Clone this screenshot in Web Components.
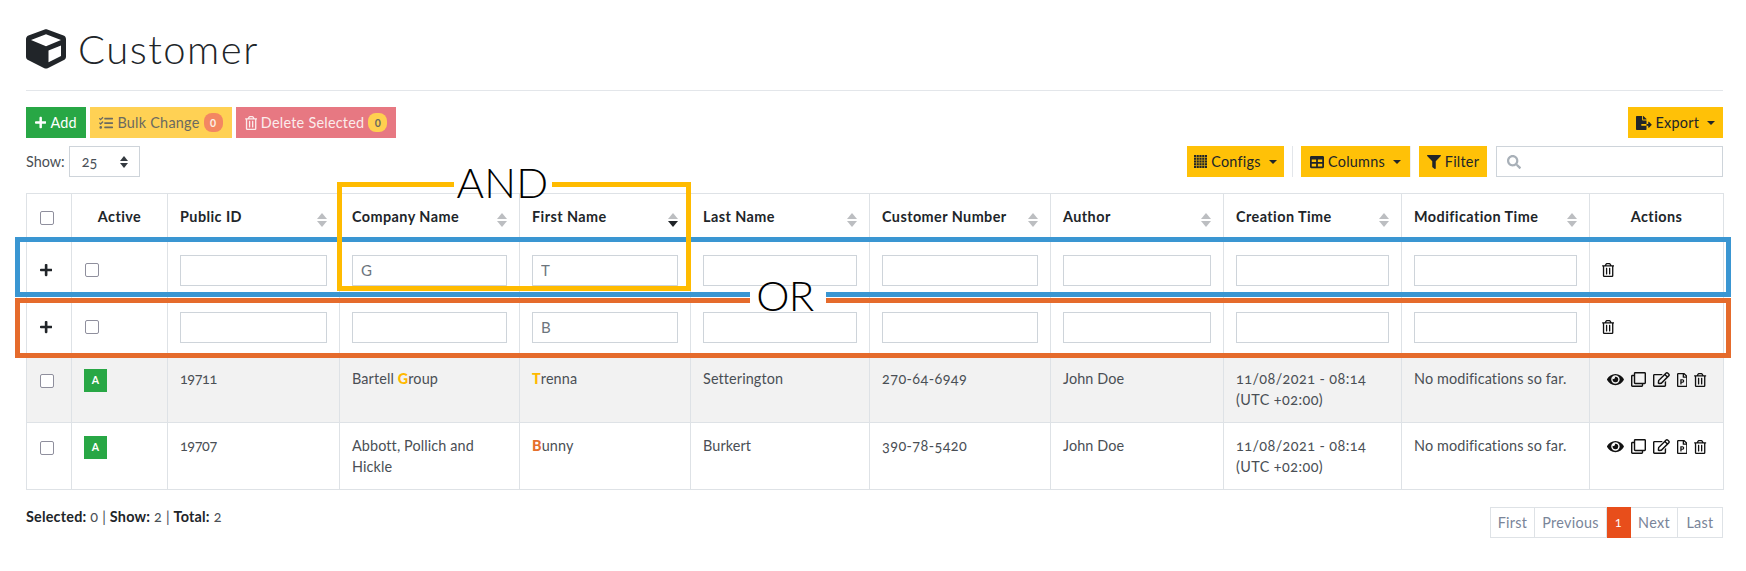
<!DOCTYPE html>
<html lang="en"><head><meta charset="utf-8"><title>Customer</title>
<style>
html,body{margin:0;padding:0;background:#fff}
body{font-family:Lato,"Liberation Sans",sans-serif;font-size:14.4px;color:#212529}
</style></head>
<body>
<customer-page></customer-page>
<script>
const ICONS={
cube:[512,"M239.1 6.3l-208 78c-18.7 7-31.1 25-31.1 45v225.1c0 18.2 10.3 34.8 26.5 42.9l208 104c13.5 6.8 29.4 6.8 42.9 0l208-104c16.3-8.1 26.5-24.8 26.5-42.9V129.3c0-20-12.4-37.9-31.1-44.9l-208-78C262 2.2 250 2.2 239.1 6.3zM256 68.4l192 72v1.1l-192 78-192-78v-1.1l192-72zm32 356V275.5l160-65v133.9l-160 80z"],
plus:[448,"M416 208H272V64c0-17.67-14.33-32-32-32h-32c-17.67 0-32 14.33-32 32v144H32c-17.67 0-32 14.33-32 32v32c0 17.67 14.33 32 32 32h144v144c0 17.67 14.33 32 32 32h32c17.67 0 32-14.33 32-32V304h144c17.67 0 32-14.33 32-32v-32c0-17.67-14.33-32-32-32z"],
trash:[448,"M268 416h24a12 12 0 0 0 12-12V188a12 12 0 0 0-12-12h-24a12 12 0 0 0-12 12v216a12 12 0 0 0 12 12zM432 80h-82.41l-34-56.7A48 48 0 0 0 274.41 0H173.59a48 48 0 0 0-41.16 23.3L98.41 80H16A16 16 0 0 0 0 96v16a16 16 0 0 0 16 16h16v336a48 48 0 0 0 48 48h288a48 48 0 0 0 48-48V128h16a16 16 0 0 0 16-16V96a16 16 0 0 0-16-16zM171.84 50.91A6 6 0 0 1 177 48h94a6 6 0 0 1 5.15 2.91L293.61 80H154.39zM368 464H80V128h288zm-212-48h24a12 12 0 0 0 12-12V188a12 12 0 0 0-12-12h-24a12 12 0 0 0-12 12v216a12 12 0 0 0 12 12z"],
tasks:[512,"M139.61 35.5a12 12 0 0 0-17 0L58.93 98.81l-22.7-22.12a12 12 0 0 0-17 0L3.53 92.41a12 12 0 0 0 0 17l47.59 47.4a12.78 12.78 0 0 0 17.61 0l15.59-15.62L156.52 69a12.09 12.09 0 0 0 .09-17zm0 159.19a12 12 0 0 0-17 0l-63.68 63.72-22.7-22.1a12 12 0 0 0-17 0L3.53 252a12 12 0 0 0 0 17L51 316.5a12.77 12.77 0 0 0 17.6 0l15.7-15.69 72.2-72.22a12 12 0 0 0 .09-16.9zM64 368c-26.49 0-48.59 21.5-48.59 48S37.53 464 64 464a48 48 0 0 0 0-96zm432 16H208a16 16 0 0 0-16 16v32a16 16 0 0 0 16 16h288a16 16 0 0 0 16-16v-32a16 16 0 0 0-16-16zm0-320H208a16 16 0 0 0-16 16v32a16 16 0 0 0 16 16h288a16 16 0 0 0 16-16V80a16 16 0 0 0-16-16zm0 160H208a16 16 0 0 0-16 16v32a16 16 0 0 0 16 16h288a16 16 0 0 0 16-16v-32a16 16 0 0 0-16-16z"],
export:[576,"M384 121.9c0-6.3-2.5-12.4-7-16.9L279.1 7c-4.5-4.5-10.6-7-17-7H256v128h128zM571 308l-95.7-96.4c-10.1-10.1-27.4-3-27.4 11.3V288h-64v64h64v65.2c0 14.3 17.3 21.4 27.4 11.3L571 332c6.6-6.6 6.6-17.4 0-24zm-379 28v-32c0-8.8 7.2-16 16-16h176V160H248c-13.2 0-24-10.8-24-24V0H24C10.7 0 0 10.7 0 24v464c0 13.3 10.7 24 24 24h336c13.3 0 24-10.7 24-24V352H208c-8.8 0-16-7.2-16-16z"],
table:[512,"M464 32H48C21.49 32 0 53.49 0 80v352c0 26.51 21.49 48 48 48h416c26.51 0 48-21.49 48-48V80c0-26.51-21.49-48-48-48zM224 416H64v-96h160v96zm0-160H64v-96h160v96zm224 160H288v-96h160v96zm0-160H288v-96h160v96z"],
filter:[512,"M487.976 0H24.028C2.71 0-8.047 25.866 7.058 40.971L192 225.941V432c0 7.831 3.821 15.17 10.237 19.662l80 55.98C298.02 518.69 320 507.493 320 487.98V225.941l184.947-184.97C520.021 25.896 509.338 0 487.976 0z"],
search:[512,"M505 442.7L405.3 343c-4.5-4.5-10.6-7-17-7H372c27.6-35.3 44-79.7 44-128C416 93.1 322.9 0 208 0S0 93.1 0 208s93.1 208 208 208c48.3 0 92.7-16.4 128-44v16.3c0 6.4 2.5 12.5 7 17l99.7 99.7c9.4 9.4 24.6 9.4 33.9 0l28.3-28.3c9.4-9.4 9.4-24.6.1-34zM208 336c-70.7 0-128-57.2-128-128 0-70.7 57.2-128 128-128 70.7 0 128 57.2 128 128 0 70.7-57.2 128-128 128z"],
eye:[576,"M572.52 241.4C518.29 135.59 410.93 64 288 64S57.68 135.64 3.48 241.41a32.35 32.35 0 0 0 0 29.19C57.71 376.41 165.07 448 288 448s230.32-71.64 284.52-177.41a32.35 32.35 0 0 0 0-29.19zM288 400a144 144 0 1 1 144-144 143.93 143.93 0 0 1-144 144zm0-240a95.31 95.31 0 0 0-25.31 3.79 47.85 47.85 0 0 1-66.9 66.9A95.78 95.78 0 1 0 288 160z"],
clone:[512,"M464 0H144c-26.51 0-48 21.49-48 48v48H48c-26.51 0-48 21.49-48 48v320c0 26.51 21.49 48 48 48h320c26.51 0 48-21.49 48-48v-48h48c26.51 0 48-21.49 48-48V48c0-26.51-21.49-48-48-48zM362 464H54a6 6 0 0 1-6-6V150a6 6 0 0 1 6-6h42v224c0 26.51 21.49 48 48 48h224v42a6 6 0 0 1-6 6zm96-96H150a6 6 0 0 1-6-6V54a6 6 0 0 1 6-6h308a6 6 0 0 1 6 6v308a6 6 0 0 1-6 6z"],
edit:[576,"M402.3 344.9l32-32c5-5 13.7-1.5 13.7 5.7V464c0 26.5-21.5 48-48 48H48c-26.5 0-48-21.5-48-48V112c0-26.5 21.5-48 48-48h273.5c7.1 0 10.7 8.6 5.7 13.7l-32 32c-1.5 1.5-3.5 2.3-5.7 2.3H48v352h352V350.5c0-2.1.8-4.1 2.3-5.6zm156.6-201.8L296.3 405.7l-90.4 10c-26.2 2.9-48.5-19.2-45.6-45.6l10-90.4L432.9 17.1c22.9-22.9 59.9-22.9 82.7 0l43.2 43.2c22.9 22.9 22.9 60 .1 82.8zM460.1 174L402 115.9 216.2 301.8l-7.3 65.3 65.3-7.3L460.1 174zm64.8-79.7l-43.2-43.2c-4.1-4.1-10.8-4.1-14.8 0L436 82l58.1 58.1 30.9-30.9c4-4.2 4-10.8-.1-14.9z"],
filep:[384,"M369.9 97.9L286 14C277 5 264.8-.1 252.1-.1H48C21.5 0 0 21.5 0 48v416c0 26.5 21.5 48 48 48h288c26.5 0 48-21.5 48-48V131.9c0-12.7-5.1-25-14.1-34zM332.1 128H256V51.9l76.1 76.1zM48 464V48h160v104c0 13.3 10.7 24 24 24h104v288H48zm72-60V236c0-6.6 5.4-12 12-12h69.2c36.7 0 62.8 27 62.8 66.3 0 74.3-68.7 66.5-95.5 66.5V404c0 6.6-5.4 12-12 12H132c-6.6 0-12-5.4-12-12zm48.5-87.4h23c7.9 0 13.9-2.4 18.1-7.2 8.5-9.8 8.4-28.5.1-37.8-4.1-4.6-9.9-7-17.4-7h-23.9v52z"]
};
function dots(){let s='<rect width="13" height="13" fill-opacity=".2"/>';for(let y=0;y<5;y++)for(let x=0;x<5;x++)s+=`<rect x="${x*2.75}" y="${y*2.75}" width="2" height="2"/>`;return s}
class AppIcon extends HTMLElement{
 connectedCallback(){
  const n=this.getAttribute('name'),s=this.getAttribute('size')||14;
  const r=this.attachShadow({mode:'open'});
  if(n==='dots'){r.innerHTML=`<style>:host{display:inline-flex;align-items:center}svg{display:block;fill:currentColor}</style><svg width="${s}" height="${s}" viewBox="0 0 13 13" aria-hidden="true">${dots()}</svg>`;return}
  const [w,d]=ICONS[n];
  const h=(+s), wd=(+s)*w/512;
  r.innerHTML=`<style>:host{display:inline-flex;align-items:center}svg{display:block;fill:currentColor}</style><svg width="${wd}" height="${h}" viewBox="0 0 ${w} 512" aria-hidden="true"><path d="${d}"/></svg>`;
 }
}
customElements.define('app-icon',AppIcon);

class AppButton extends HTMLElement{
 constructor(){super();this.attachShadow({mode:'open'}).innerHTML=`<style>
 :host{display:inline-flex;align-items:center;justify-content:center;height:31px;box-sizing:border-box;gap:4px;white-space:nowrap;font-size:14.4px;letter-spacing:.25px;background:var(--bg,#ffc107);color:var(--fg,#212529);font-family:Lato,sans-serif}
 :host([caret])::after{content:"";margin-left:4px;border-top:4.5px solid currentColor;border-left:4.5px solid transparent;border-right:4.5px solid transparent}
 </style><slot></slot>`}
}
customElements.define('app-button',AppButton);

class CountBadge extends HTMLElement{
 constructor(){super();this.attachShadow({mode:'open'}).innerHTML=`<style>
 :host{display:inline-flex;align-items:center;justify-content:center;width:19px;height:19px;border-radius:8px;font-size:10.5px;font-weight:700;background:var(--bg);color:var(--fg);margin-left:0}
 </style><slot></slot>`}
}
customElements.define('count-badge',CountBadge);

class PageTitle extends HTMLElement{
 constructor(){super();this.attachShadow({mode:'open'}).innerHTML=`<style>
 :host{display:flex;align-items:center;gap:12px;height:40px;margin-top:29px;padding-bottom:21px;border-bottom:1px solid #e3e6ea;font-family:Lato,sans-serif}
 h1{margin:0;font-size:40px;font-weight:300;line-height:40px;letter-spacing:1.5px;color:#212529}
 app-icon{color:#212529;margin-top:-1px}
 </style><app-icon name="cube" size="40"></app-icon><h1><slot></slot></h1>`}
}
customElements.define('page-title',PageTitle);

class ActionBar extends HTMLElement{
 constructor(){super();this.attachShadow({mode:'open'}).innerHTML=`<style>
 :host{display:flex;justify-content:space-between;align-items:center;margin-top:16px}
 .l{display:flex;gap:4px}
 .b{--bg:#ffd154;--fg:#6b6a60;width:142px}
 .d{--bg:#e77882;--fg:#fbecec;width:160px}
 </style><div class="l">
 <app-button style="--bg:#28a745;--fg:#fff;width:60px"><app-icon name="plus" size="13"></app-icon>Add</app-button>
 <app-button class="b"><app-icon name="tasks" size="14"></app-icon>Bulk Change<count-badge style="--bg:#f38662;--fg:#fbeee6">0</count-badge></app-button>
 <app-button class="d"><app-icon name="trash" size="14"></app-icon>Delete Selected<count-badge style="--bg:#ffd04f;--fg:#6b6a60">0</count-badge></app-button>
 </div>
 <app-button caret style="width:95px"><app-icon name="export" size="14"></app-icon>Export</app-button>`}
}
customElements.define('action-bar',ActionBar);

class ShowBar extends HTMLElement{
 constructor(){super();this.attachShadow({mode:'open'}).innerHTML=`<style>
 :host{display:flex;align-items:center;justify-content:space-between;margin-top:8px;height:31px;font-family:Lato,sans-serif}
 .l,.r{display:flex;align-items:center}
 .l{color:#4a4f55}
 .sel{box-sizing:border-box;width:71px;height:31px;border:1px solid #ced4da;margin-left:4px;display:flex;align-items:center;justify-content:space-between;padding:0 11px 0 12px;color:#495057;font-feature-settings:"onum"}
 .arr{display:flex;flex-direction:column;gap:2px}
 .arr i{display:block;border-left:4px solid transparent;border-right:4px solid transparent}
 .arr i:first-child{border-bottom:5px solid #343a40}.arr i:last-child{border-top:5px solid #343a40}
 .sep{width:1px;height:31px;background:#e3e6ea;margin:0 8px}
 .sep.w{background:#f0f0f0;margin:0 8px 0 0}
 .s{box-sizing:border-box;width:227px;height:31px;border:1px solid #ced4da;margin-left:9px;display:flex;align-items:center;padding-left:10px;color:#a8b0b8}
 </style><div class="l">Show:<div class="sel">25<span class="arr"><i></i><i></i></span></div></div>
 <div class="r">
 <app-button caret style="width:97px"><app-icon name="dots" size="13"></app-icon>Configs</app-button><span class="sep"></span>
 <app-button caret style="width:109px"><app-icon name="table" size="14"></app-icon>Columns</app-button><span class="sep w"></span>
 <app-button style="width:68px"><app-icon name="filter" size="14"></app-icon>Filter</app-button>
 <div class="s"><app-icon name="search" size="14"></app-icon></div></div>`}
}
customElements.define('show-bar',ShowBar);

class SortMark extends HTMLElement{
 constructor(){super();this.attachShadow({mode:'open'}).innerHTML=`<style>
 :host{display:flex;flex-direction:column;gap:2px;margin-top:7px;flex:none}
 i{display:block;border-left:5px solid transparent;border-right:5px solid transparent}
 .u{border-bottom:6px solid #bcbec1}.d{border-top:6px solid #bcbec1}
 :host([active]) .d{border-top-color:#212529}
 </style><i class="u"></i><i class="d"></i>`}
}
customElements.define('sort-mark',SortMark);

class DataTable extends HTMLElement{
 constructor(){super();
 const widths=[45,96,172,180,171,179,181,173,178,188,134];
 const heads=['Public ID','Company Name','First Name','Last Name','Customer Number','Author','Creation Time','Modification Time'];
 const th=heads.map(h=>`<th><div class="h"><span>${h}</span><sort-mark${h==='First Name'?' active':''}></sort-mark></div></th>`).join('');
 const frow=(c,f)=>`<tr class="f"><td class="plus"><app-icon name="plus" size="14"></app-icon></td><td class="c2"><input type="checkbox" aria-label="Active"></td>`+
   [0,1,2,3,4,5,6,7].map(i=>`<td><input class="t" type="text" aria-label="${heads[i]}" value="${i===1?c:i===2?f:''}"></td>`).join('')+
   `<td class="a"><app-icon name="trash" size="14"></app-icon></td></tr>`;
 const acts=`<div class="acts"><app-icon name="eye" size="15"></app-icon><app-icon name="clone" size="15"></app-icon><app-icon name="edit" size="15"></app-icon><app-icon name="filep" size="14"></app-icon><app-icon name="trash" size="14"></app-icon></div>`;
 const row=(cls,id,co,fn,ln,num)=>`<tr class="${cls}"><td class="c1"><input type="checkbox" aria-label="Select"></td><td class="c2"><span class="st">A</span></td><td class="id">${id}</td><td>${co}</td><td>${fn}</td><td>${ln}</td><td class="n">${num}</td><td>John Doe</td><td class="n">11/08/2021 - 08:14<br>(UTC +02:00)</td><td>No modifications so far.</td><td class="a">${acts}</td></tr>`;
 this.attachShadow({mode:'open'}).innerHTML=`<style>
 :host{display:block;font-family:Lato,sans-serif;color:#4a4f55}
 table{border-collapse:collapse;table-layout:fixed;width:1697px;font-size:14.4px;letter-spacing:.12px}
 th,td{border:1px solid #dee2e6;padding:12px;line-height:21px;vertical-align:top;text-align:left;box-sizing:border-box}
 th{height:48px;color:#212529;font-weight:700;letter-spacing:.44px;white-space:nowrap}
 th.ct{text-align:center}
 .h{display:flex;justify-content:space-between}
 th.c1,td.c1{padding:0 0 0 13px}
 th.c1{vertical-align:middle}
 input[type=checkbox]{appearance:none;-webkit-appearance:none;box-sizing:border-box;margin:0;width:14px;height:14px;display:block;background:#fff;border:1.5px solid #8f8f9d;border-radius:2px}
 tr.f td{height:57px;padding:0 12px;vertical-align:middle}
 tr.f td.plus{padding-left:13px;color:#212529}
 tr.f td.c2{padding-left:13px}
 tr.f app-icon{display:flex}
 .t{display:block;box-sizing:border-box;width:100%;height:31px;border:1px solid #ced4da;padding:0 8px;font:15px Lato,sans-serif;color:#6c757d;background:#fff;border-radius:0;outline:none}
 tr.d td{height:67px}
 tr.d.s td{background:#f2f2f2}
 tr.d td.c1 input{margin-top:18px}
 .st{display:flex;width:23px;height:23px;align-items:center;justify-content:center;background:#28a745;color:#fff;font-size:10.5px;font-weight:700;margin-top:1px}
 .n{font-feature-settings:"onum";letter-spacing:.42px}
 .id{font-feature-settings:"onum";letter-spacing:-.4px}
 b{font-weight:900}
 b.y{color:#ffb900}b.o{color:#e5702c}
 .acts{display:flex;align-items:center;gap:7px;color:#111;padding:4px 0 0 5px}
 tr.f td.a{color:#111}
 </style><table><colgroup>${widths.map(w=>`<col style="width:${w}px">`).join('')}</colgroup>
 <thead><tr><th class="c1"><input type="checkbox" aria-label="Select all"></th><th class="ct">Active</th>${th}<th class="ct">Actions</th></tr></thead>
 <tbody>${frow('G','T')}${frow('','B')}
 ${row('d s','19711','Bartell <b class="y">G</b>roup','<b class="y">T</b>renna','Setterington','270-64-6949')}
 ${row('d','19707','Abbott, Pollich and Hickle','<b class="o">B</b>unny','Burkert','390-78-5420')}
 </tbody></table>`}
}
customElements.define('data-table',DataTable);

class LogicFrame extends HTMLElement{
 constructor(){super();this.attachShadow({mode:'open'}).innerHTML=`<style>
 :host{position:absolute;box-sizing:border-box;left:var(--x);top:var(--y);width:var(--w);height:var(--h);border:5px solid var(--c);pointer-events:none}
 </style>`}
}
customElements.define('logic-frame',LogicFrame);

class LogicLabel extends HTMLElement{
 constructor(){super();this.attachShadow({mode:'open'}).innerHTML=`<style>
 :host{position:absolute;left:var(--x);top:var(--y);width:var(--w);height:42px;text-align:center;font:300 42px/42px Lato,sans-serif;letter-spacing:var(--ls,1px);color:#000;white-space:nowrap}
 </style><slot></slot>`}
}
customElements.define('logic-label',LogicLabel);

class GapStrip extends HTMLElement{
 constructor(){super();this.attachShadow({mode:'open'}).innerHTML=`<style>
 :host{position:absolute;left:var(--x);top:var(--y);width:var(--w);height:5px;background:#fff}
 </style>`}
}
customElements.define('gap-strip',GapStrip);

class TableFooter extends HTMLElement{
 constructor(){super();this.attachShadow({mode:'open'}).innerHTML=`<style>
 :host{display:flex;justify-content:space-between;align-items:flex-start;margin-top:17px;font-family:Lato,sans-serif}
 .i{color:#4a4f55;font-size:14.4px;letter-spacing:.2px;line-height:21px;margin-top:-1px;font-feature-settings:"onum"}
 .i b{color:#212529;font-weight:700}
 nav{display:flex;height:31px;box-sizing:border-box;font-size:14.4px;letter-spacing:.3px;color:#7a8599}
 nav span{box-sizing:border-box;display:flex;align-items:center;justify-content:center;border:1px solid #dee2e6;border-left-width:0;height:31px}
 nav span:first-child{border-left-width:1px}
 nav span.on{background:#e84e1b;border-color:#e84e1b;color:#fff;font-size:12px}
 </style><div class="i"><b>Selected:</b> 0 | <b>Show:</b> 2 | <b>Total:</b> 2</div>
 <nav><span style="width:45px">First</span><span style="width:72px">Previous</span><span class="on" style="width:24px">1</span><span style="width:47px">Next</span><span style="width:45px">Last</span></nav>`}
}
customElements.define('table-footer',TableFooter);

class CustomerPage extends HTMLElement{
 constructor(){super();this.attachShadow({mode:'open'}).innerHTML=`<style>
 :host{display:block;padding:0 23px 0 26px;position:relative;height:571px;box-sizing:border-box;overflow:hidden}
 .tw{margin-top:16px}
 </style>
 <page-title>Customer</page-title>
 <action-bar></action-bar>
 <show-bar></show-bar>
 <div class="tw"><data-table></data-table></div>
 <table-footer></table-footer>
 <logic-frame style="--x:15px;--y:237px;--w:1716px;--h:60px;--c:#3a96d2"></logic-frame>
 <logic-frame style="--x:15px;--y:298px;--w:1716px;--h:60px;--c:#e56b2c"></logic-frame>
 <logic-frame style="--x:337px;--y:182px;--w:354px;--h:109px;--c:#ffbb00"></logic-frame>
 <gap-strip style="--x:454px;--y:182px;--w:98px"></gap-strip>
 <gap-strip style="--x:750px;--y:292px;--w:76px"></gap-strip>
 <gap-strip style="--x:750px;--y:298px;--w:76px"></gap-strip>
 <logic-label style="--x:453px;--y:161px;--w:99px;--ls:.3px">AND</logic-label>
 <logic-label style="--x:747px;--y:274px;--w:76px;--ls:-.5px">OR</logic-label>`}
}
customElements.define('customer-page',CustomerPage);
</script>
</body></html>
